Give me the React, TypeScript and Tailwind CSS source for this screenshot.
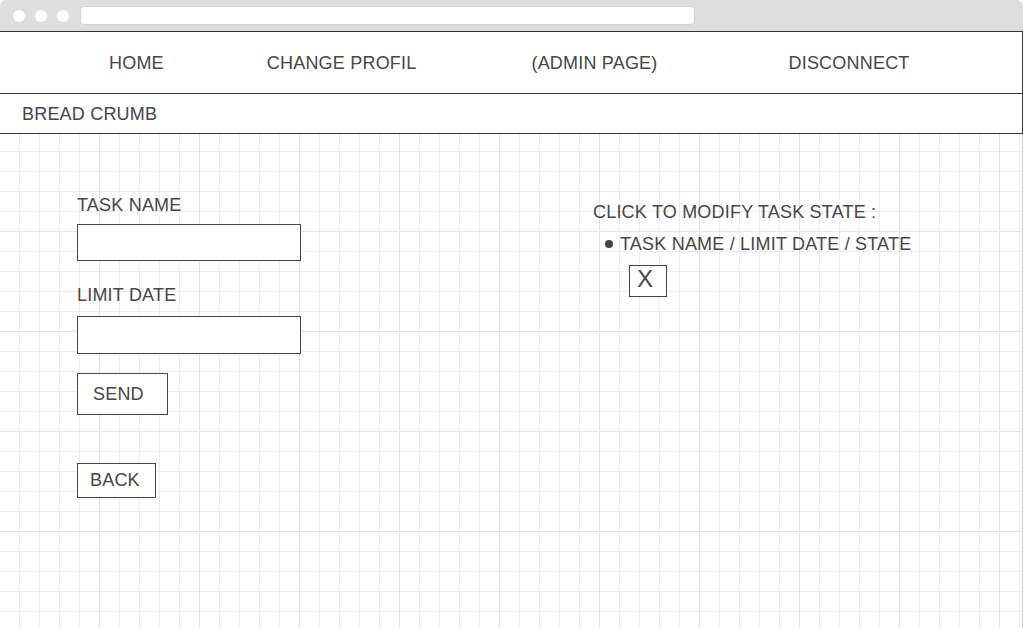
const NAV = [
  { label: 'HOME', ml: 'ml-[109px]' },
  { label: 'CHANGE PROFIL', ml: 'ml-[103px]' },
  { label: '(ADMIN PAGE)', ml: 'ml-[115px]' },
  { label: 'DISCONNECT', ml: 'ml-[131px]' },
]

function Chrome() {
  return (
    <div className="h-[31px] bg-[#dedede] rounded-t-[6px] flex items-center pl-[13px]">
      <span className="w-[12px] h-[12px] rounded-full bg-white" />
      <span className="w-[12px] h-[12px] rounded-full bg-white ml-[10px]" />
      <span className="w-[12px] h-[12px] rounded-full bg-white ml-[10px]" />
      <div className="ml-[11px] w-[615px] h-[19px] bg-white rounded-[4px] border border-[#d2d2d2]" />
    </div>
  )
}

export default function App() {
  return (
    <div className="w-[1023px] h-[628px] flex flex-col bg-white font-['Liberation_Sans',Arial,sans-serif] text-[18px] tracking-[0.2px] text-[#464646] overflow-hidden">
      <Chrome />

      {/* Nav */}
      <nav className="h-[63px] border-y border-r border-[#333] flex items-center">
        {NAV.map(n => (
          <span key={n.label} className={`${n.ml} leading-[20px] whitespace-nowrap`}>
            {n.label}
          </span>
        ))}
      </nav>

      {/* Breadcrumb */}
      <div className="h-[40px] border-b border-r border-[#333] flex items-center pl-[22px] leading-[20px]">
        BREAD CRUMB
      </div>

      {/* Content */}
      <main className="flex-1 flex border-r border-[#cfcfcf] bg-white bg-[linear-gradient(to_right,transparent_99px,#e2e2e2_99px),linear-gradient(to_bottom,transparent_99px,#e2e2e2_99px),linear-gradient(to_right,transparent_19px,#ededed_19px),linear-gradient(to_bottom,transparent_19px,#ededed_19px)] bg-[size:100px_100px,100px_100px,20px_20px,20px_20px] bg-[position:0_-2px]">
        {/* Form */}
        <div className="w-[593px] pl-[77px] pt-[61px] flex flex-col items-start leading-[20px]">
          <label>TASK NAME</label>
          <div className="mt-[9px] w-[224px] h-[37px] border border-[#444] bg-white" />
          <label className="mt-[24px]">LIMIT DATE</label>
          <div className="mt-[11px] w-[224px] h-[38px] border border-[#444] bg-white" />
          <button className="mt-[19px] w-[91px] h-[42px] border border-[#444] bg-white pl-[15px] text-left">
            SEND
          </button>
          <button className="mt-[48px] w-[79px] h-[35px] border border-[#444] bg-white pl-[12px] pb-[2px] text-left">
            BACK
          </button>
        </div>

        {/* Task list */}
        <div className="pt-[68px] flex flex-col items-start leading-[20px]">
          <div>CLICK TO MODIFY TASK STATE :</div>
          <div className="mt-[12px] flex items-center">
            <span className="ml-[12px] mr-[7px] w-[8px] h-[8px] rounded-full bg-[#444]" />
            <span>TASK NAME / LIMIT DATE / STATE</span>
          </div>
          <button className="mt-[11px] ml-[36px] w-[38px] h-[32px] border border-[#444] bg-white pl-[7px] pt-[1px] text-left text-[24px] leading-[24px] tracking-normal flex items-start">
            X
          </button>
        </div>
      </main>
    </div>
  )
}
